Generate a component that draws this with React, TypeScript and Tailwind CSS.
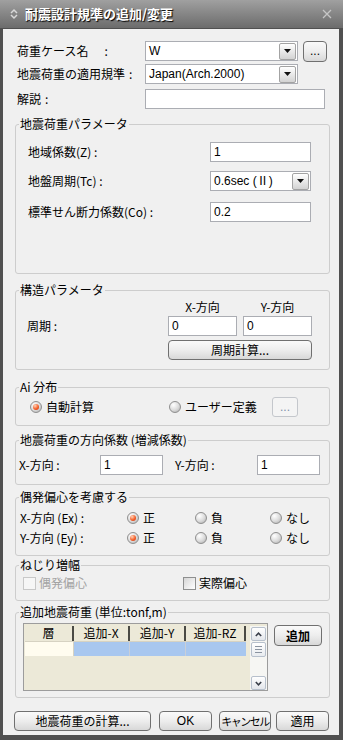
import React from 'react';

const latin = "font-['Liberation_Sans','Noto_Sans_CJK_JP',sans-serif]";

function TextBox({ value, className = '' }: { value?: string; className?: string }) {
  return (
    <div className={`flex h-[20px] items-center border border-[#abadb3] bg-white pl-[3px] ${latin} ${className}`}>
      {value}
    </div>
  );
}

function Combo({ value, className = '' }: { value: string; className?: string }) {
  return (
    <div className={`flex h-[20px] items-center justify-between border border-[#abadb3] bg-white pl-[3px] pr-[1px] ${latin} ${className}`}>
      <span>{value}</span>
      <span className="flex h-[17px] w-[17px] items-center justify-center rounded-[2px] border border-[#a3a3a3] bg-linear-to-b from-white to-[#d3d3d3]">
        <svg width="7" height="4" viewBox="0 0 7 4">
          <path d="M0 0h7L3.5 4z" fill="#111" />
        </svg>
      </span>
    </div>
  );
}

function Btn({ children, className = '' }: { children: React.ReactNode; className?: string }) {
  return (
    <button
      type="button"
      className={`flex items-center justify-center whitespace-nowrap rounded-[4px] border border-[#707070] bg-linear-to-b from-[#fafafa] via-[#ededed] to-[#d8d8d8] ${className}`}
    >
      {children}
    </button>
  );
}

function Radio({ checked, label, className = '' }: { checked?: boolean; label: string; className?: string }) {
  return (
    <div className={`flex items-center gap-[4px] ${className}`}>
      <span className="flex h-[12px] w-[12px] shrink-0 items-center justify-center rounded-full border border-[#8f8f8f] bg-[radial-gradient(circle_at_35%_30%,#ffffff,#dadada_55%,#a8a8a8)]">
        {checked && (
          <span className="h-[6px] w-[6px] rounded-full bg-[radial-gradient(circle_at_35%_30%,#ffd4ba,#f4602a_55%,#c4300c)]" />
        )}
      </span>
      <span>{label}</span>
    </div>
  );
}

function Check({ label, disabled, className = '' }: { label: string; disabled?: boolean; className?: string }) {
  return (
    <div className={`flex items-center gap-[3px] ${className}`}>
      <span
        className={
          disabled
            ? 'h-[13px] w-[13px] shrink-0 border border-[#c8c8c8] bg-[#f6f6f6]'
            : 'h-[13px] w-[13px] shrink-0 border border-[#8e8f8f] bg-linear-to-br from-[#d6d6d6] to-white'
        }
      />
      <span className={disabled ? 'text-[#a3a3a3]' : ''}>{label}</span>
    </div>
  );
}

function Group({ title, className = '', children }: { title: string; className?: string; children: React.ReactNode }) {
  return (
    <fieldset className={`w-[315px] rounded-[3px] border border-[#cdcdcd] px-[3px] ${className}`}>
      <legend className="px-[1px] leading-[14px]">{title}</legend>
      {children}
    </fieldset>
  );
}

function ScrollBtn({ up }: { up?: boolean }) {
  return (
    <span className="flex h-[14px] w-[15px] items-center justify-center rounded-[2px] border border-[#b7c0cc] bg-linear-to-b from-white to-[#e3e6eb]">
      <svg width="7" height="5" viewBox="0 0 7 5">
        <path d={up ? 'M0.8 4L3.5 1.2L6.2 4' : 'M0.8 1L3.5 3.8L6.2 1'} fill="none" stroke="#3a3f4a" strokeWidth="1.6" />
      </svg>
    </span>
  );
}

export default function App() {
  return (
    <div className="flex h-[740px] w-[343px] flex-col bg-[#505050] font-['Noto_Sans_CJK_JP','Liberation_Sans',sans-serif] text-[12px] leading-[14px] text-black">
      {/* Title bar */}
      <div className="flex h-[28px] shrink-0 items-center bg-linear-to-b from-[#a0a0a0] to-[#6c6c6c] pl-[10px] pr-[11px]">
        <svg width="8" height="12" viewBox="0 0 8 12">
          <path d="M1 5L4 2L7 5M1 7L4 10L7 7" fill="none" stroke="#d8d8d8" strokeWidth="1.5" />
        </svg>
        <span className="ml-[7px] text-[13px] font-bold text-white [text-shadow:1px_1px_1px_#000]">
          耐震設計規準の追加/変更
        </span>
        <svg className="ml-auto" width="10" height="10" viewBox="0 0 10 10">
          <path d="M1 1L9 9M9 1L1 9" stroke="#c6c6c6" strokeWidth="1.3" />
        </svg>
      </div>

      {/* Body */}
      <div className="mb-[5px] ml-[3px] mr-[4px] mt-[1px] flex flex-1 flex-col bg-[#f0f0f0] pl-[12px]">
        <div className="mt-[12px] flex h-[20px] items-center">
          <span className="w-[130px] pl-[2px]">
            荷重ケース名<span className="ml-[16px]">:</span>
          </span>
          <Combo value="W" className="w-[153px]" />
          <Btn className={`ml-[5px] h-[21px] w-[24px] ${latin}`}>...</Btn>
        </div>
        <div className="mt-[3px] flex h-[20px] items-center">
          <span className="w-[130px] pl-[2px]">
            地震荷重の適用規準<span className="ml-[4px]">:</span>
          </span>
          <Combo value="Japan(Arch.2000)" className="w-[153px]" />
        </div>
        <div className="mt-[5px] flex h-[20px] items-center">
          <span className="w-[130px] pl-[2px]">
            解説<span className="ml-[4px]">:</span>
          </span>
          <TextBox className="w-[180px]" />
        </div>

        <Group title="地震荷重パラメータ" className="mt-[8px]">
          <div className="pb-[51px] pl-[9px] pt-[11px]">
            <div className="flex h-[20px] items-center">
              <span className="w-[182px]">地域係数(Z) :</span>
              <TextBox value="1" className="w-[101px]" />
            </div>
            <div className="mt-[9px] flex h-[20px] items-center">
              <span className="w-[182px]">地盤周期(Tc) :</span>
              <Combo value="0.6sec (Ⅱ)" className="w-[101px]" />
            </div>
            <div className="mt-[11px] flex h-[20px] items-center">
              <span className="w-[182px]">標準せん断力係数(Co) :</span>
              <TextBox value="0.2" className="w-[101px]" />
            </div>
          </div>
        </Group>

        <Group title="構造パラメータ" className="mt-[9px]">
          <div className="pb-[9px] pl-[8px] pt-[3px]">
            <div className="flex h-[14px] items-center">
              <span className="w-[141px]" />
              <span className="w-[69px] text-center">X-方向</span>
              <span className="ml-[6px] w-[69px] text-center">Y-方向</span>
            </div>
            <div className="mt-[2px] flex h-[20px] items-center">
              <span className="w-[141px]">周期 :</span>
              <TextBox value="0" className="w-[69px]" />
              <TextBox value="0" className="ml-[6px] w-[69px]" />
            </div>
            <Btn className="ml-[141px] mt-[4px] h-[20px] w-[144px]">周期計算...</Btn>
          </div>
        </Group>

        <Group title="Ai 分布" className="mt-[10px]">
          <div className="mb-[8px] mt-[3px] flex h-[20px] items-center pl-[11px]">
            <Radio checked label="自動計算" className="w-[139px]" />
            <Radio label="ユーザー定義" className="w-[103px]" />
            <button
              type="button"
              className={`flex h-[20px] w-[26px] items-center justify-center rounded-[3px] border border-[#c4c7cc] bg-[#f4f4f4] text-[#7f90aa] ${latin}`}
            >
              ...
            </button>
          </div>
        </Group>

        <Group title="地震荷重の方向係数 (増減係数)" className="mt-[7px]">
          <div className="mb-[9px] mt-[8px] flex h-[20px] items-center">
            <span className="w-[81px]">X-方向 :</span>
            <TextBox value="1" className="w-[63px]" />
            <span className="ml-[12px] w-[82px]">Y-方向 :</span>
            <TextBox value="1" className="w-[63px]" />
          </div>
        </Group>

        <Group title="偶発偏心を考慮する" className="mt-[5px]">
          <div className="pb-[8px] pl-[1px] pt-[5px]">
            <div className="flex h-[18px] items-center">
              <span className="w-[107px]">X-方向 (Ex) :</span>
              <Radio checked label="正" className="w-[68px]" />
              <Radio label="負" className="w-[75px]" />
              <Radio label="なし" />
            </div>
            <div className="mt-[2px] flex h-[18px] items-center">
              <span className="w-[107px]">Y-方向 (Ey) :</span>
              <Radio checked label="正" className="w-[68px]" />
              <Radio label="負" className="w-[75px]" />
              <Radio label="なし" />
            </div>
          </div>
        </Group>

        <Group title="ねじり増幅" className="mt-[2px]">
          <div className="mb-[9px] mt-[3px] flex h-[16px] items-center pl-[4px]">
            <Check disabled label="偶発偏心" className="w-[160px]" />
            <Check label="実際偏心" />
          </div>
        </Group>

        <Group title="追加地震荷重 (単位:tonf,m)" className="mt-[4px]">
          <div className="mb-[6px] mt-[4px] flex items-start pl-[4px]">
            <div className="flex h-[68px] w-[245px] border border-[#9c9c9c] bg-[#ece9d8] pl-[1px] pt-[2px]">
              <div className="flex w-[221px] flex-col">
                <div className="flex h-[15px] bg-[#ece9d8] leading-[14px]">
                  <span className="w-[49px] border-r-2 border-r-[#4a4a44] text-center">層</span>
                  <span className="w-[56px] border-r-2 border-r-[#4a4a44] text-center">追加-X</span>
                  <span className="w-[56px] border-r-2 border-r-[#4a4a44] text-center">追加-Y</span>
                  <span className="w-[60px] border-r-2 border-r-[#4a4a44] text-center">追加-RZ</span>
                </div>
                <div className="flex h-[15px] border-t border-[#d6d2c2]">
                  <span className="w-[49px] border-r border-[#d6d2c2] bg-[#fffcef]" />
                  <span className="w-[56px] border-r border-[#c9cfd8] bg-[#a8c7ef]" />
                  <span className="w-[56px] border-r border-[#c9cfd8] bg-[#a8c7ef]" />
                  <span className="w-[60px] bg-[#a8c7ef]" />
                </div>
              </div>
              <div className="ml-[4px] flex h-[64px] w-[17px] flex-col items-center bg-[#f6f6f3] pt-[1px]">
                <ScrollBtn up />
                <span className="mt-[1px] flex h-[15px] w-[15px] flex-col items-center justify-center gap-[2px] rounded-[2px] border border-[#b7c0cc] bg-linear-to-b from-white to-[#e8ebef]">
                  <span className="h-px w-[7px] bg-[#8a93a0]" />
                  <span className="h-px w-[7px] bg-[#8a93a0]" />
                  <span className="h-px w-[7px] bg-[#8a93a0]" />
                </span>
                <span className="flex-1" />
                <ScrollBtn />
              </div>
            </div>
            <Btn className="ml-[6px] mt-[2px] h-[21px] w-[48px] font-bold">追加</Btn>
          </div>
        </Group>

        <div className="-ml-[1px] mt-[13px] flex h-[20px] items-center">
          <Btn className="h-[20px] w-[137px]">地震荷重の計算...</Btn>
          <Btn className={`ml-[8px] h-[20px] w-[53px] ${latin}`}>OK</Btn>
          <Btn className="ml-[7px] h-[20px] w-[52px] text-[11px] tracking-[-1.5px]">キャンセル</Btn>
          <Btn className="ml-[5px] h-[20px] w-[53px]">適用</Btn>
        </div>
      </div>
    </div>
  );
}
